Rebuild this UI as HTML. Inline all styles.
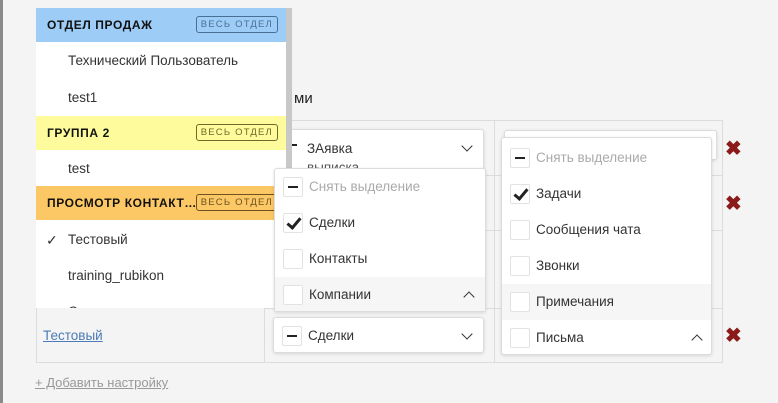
<!DOCTYPE html>
<html><head><meta charset="utf-8"><style>
*{box-sizing:border-box;margin:0;padding:0}
body{width:778px;height:403px;background:#f4f4f4;font-family:"Liberation Sans",sans-serif;font-size:13px;color:#333;position:relative;overflow:hidden}
.abs{position:absolute}
.vl{position:absolute;width:1px;background:#dcdcdc}
.hl{position:absolute;height:1px;background:#dcdcdc}
.cb{position:absolute;width:20px;height:20px;background:#fff;border:1px solid #e2e2e2;border-radius:2px}
.cb.minus::after{content:"";position:absolute;left:4px;top:8px;width:10px;height:2px;background:#222}
.cb.chk::after{content:"";position:absolute;left:6px;top:1px;width:5px;height:11px;border:solid #222;border-width:0 3px 3px 0;transform:rotate(40deg)}
.dd{position:absolute;background:#fff;border:1px solid #dcdcdc;border-radius:3px;box-shadow:0 1px 3px rgba(0,0,0,.12)}
.it{position:absolute;left:0;right:0;height:36px}
.it span{position:absolute;left:34px;top:10px;font-size:13.5px}
.it .cb{left:8px;top:8px}
.hdr{position:absolute;left:0;width:250px;height:34px;font-weight:bold;font-size:12px;letter-spacing:0.6px;color:#111}
.hdr b{position:absolute;left:11px;top:10px}
.tag{position:absolute;right:8px;top:8px;height:17px;border:1px solid;border-radius:3px;font-size:9.5px;font-weight:normal;letter-spacing:1.2px;padding:2px 4px;line-height:11px}
.x{position:absolute;color:#8b1a1a;font-weight:bold;font-size:20px;line-height:20px}
.chev{position:absolute;width:8px;height:8px;border:solid #333;border-width:0 1.5px 1.5px 0}
</style></head><body>
<div class="abs" style="left:0;top:0;width:3px;height:403px;background:#8a8a8a"></div>
<div class="abs" style="left:294px;top:90px;font-size:15px;color:#222">ми</div>
<!-- table -->
<div class="hl" style="left:36px;top:120px;width:686px"></div>
<div class="hl" style="left:36px;top:362px;width:686px"></div>
<div class="vl" style="left:36px;top:120px;height:243px"></div>
<div class="vl" style="left:264px;top:120px;height:243px"></div>
<div class="vl" style="left:494px;top:120px;height:243px"></div>
<div class="vl" style="left:722px;top:120px;height:243px"></div>
<div class="hl" style="left:264px;top:175px;width:458px"></div>
<div class="hl" style="left:264px;top:230px;width:458px"></div>
<div class="hl" style="left:264px;top:308px;width:458px"></div>
<div class="abs" style="left:43px;top:328px;color:#4a7ab8;text-decoration:underline;font-size:13.5px">Тестовый</div>
<div class="abs" style="left:35px;top:375px;color:#999;text-decoration:underline;font-size:13px">+ Добавить настройку</div>
<!-- underlying select -->
<div class="dd" style="left:287px;top:129px;width:197px;height:42px"></div>
<div class="abs" style="left:307px;top:141px;font-size:13.5px">ЗАявка</div>
<div class="abs" style="left:307px;top:160px;font-size:13.5px;color:#555">выписка</div>
<div class="chev" style="left:463px;top:142px;transform:rotate(45deg)"></div>
<div class="abs" style="left:292px;top:144px;width:5px;height:2px;background:#222"></div>
<div class="dd" style="left:504px;top:130px;width:213px;height:30px"></div>
<!-- bottom select -->
<div class="dd" style="left:273px;top:317px;width:211px;height:36px"></div>
<div class="cb minus" style="left:282px;top:326px"></div>
<div class="abs" style="left:308px;top:328px;font-size:13.5px">Сделки</div>
<div class="chev" style="left:463px;top:330px;transform:rotate(45deg)"></div>
<!-- left dropdown -->
<div class="abs" style="left:36px;top:8px;width:256px;height:300px;background:#fff;overflow:hidden">
 <div class="hdr" style="top:0;background:#9dccf6"><b>ОТДЕЛ ПРОДАЖ</b><span class="tag" style="color:#4a6f95;border-color:#4a6f95">ВЕСЬ ОТДЕЛ</span></div>
 <div class="abs" style="left:32px;top:45px;font-size:13.5px">Технический Пользователь</div>
 <div class="abs" style="left:32px;top:82px;font-size:13.5px">test1</div>
 <div class="hdr" style="top:108px;background:#fdfb9b"><b>ГРУППА 2</b><span class="tag" style="color:#6d6a2a;border-color:#6d6a2a">ВЕСЬ ОТДЕЛ</span></div>
 <div class="abs" style="left:32px;top:153px;font-size:13.5px">test</div>
 <div class="hdr" style="top:178px;background:#fbc865"><b>ПРОСМОТР КОНТАКТ…</b><span class="tag" style="color:#6e5220;border-color:#6e5220;background:#fbc865">ВЕСЬ ОТДЕЛ</span></div>
 <div class="abs" style="left:10px;top:224px;font-size:14px">✓</div>
 <div class="abs" style="left:32px;top:224px;font-size:13.5px">Тестовый</div>
 <div class="abs" style="left:32px;top:260px;font-size:13.5px">training_rubikon</div>
 <div class="abs" style="left:32px;top:296px;font-size:13.5px">С</div>
 <div class="abs" style="left:250px;top:0;width:6px;height:195px;background:#c8c8c8"></div>
</div>
<!-- middle dropdown -->
<div class="dd" style="left:274px;top:168px;width:212px;height:144px;overflow:hidden">
 <div class="it" style="top:0"><div class="cb minus"></div><span style="color:#aaa">Снять выделение</span></div>
 <div class="it" style="top:36px"><div class="cb chk"></div><span>Сделки</span></div>
 <div class="it" style="top:72px"><div class="cb"></div><span>Контакты</span></div>
 <div class="it" style="top:108px;background:#f6f6f6"><div class="cb"></div><span>Компании</span><div class="chev" style="left:190px;top:16px;transform:rotate(-135deg)"></div></div>
</div>
<!-- right dropdown -->
<div class="dd" style="left:501px;top:137px;width:211px;height:218px;overflow:hidden">
 <div class="it" style="top:2px"><div class="cb minus"></div><span style="color:#aaa">Снять выделение</span></div>
 <div class="it" style="top:38px"><div class="cb chk"></div><span>Задачи</span></div>
 <div class="it" style="top:74px"><div class="cb"></div><span>Сообщения чата</span></div>
 <div class="it" style="top:110px"><div class="cb"></div><span>Звонки</span></div>
 <div class="it" style="top:146px;background:#f6f6f6"><div class="cb"></div><span>Примечания</span></div>
 <div class="it" style="top:182px"><div class="cb"></div><span>Письма</span><div class="chev" style="left:191px;top:16px;transform:rotate(-135deg)"></div></div>
</div>
<div class="x" style="left:725px;top:139px">✖</div>
<div class="x" style="left:725px;top:194px">✖</div>
<div class="x" style="left:725px;top:326px">✖</div>
</body></html>
